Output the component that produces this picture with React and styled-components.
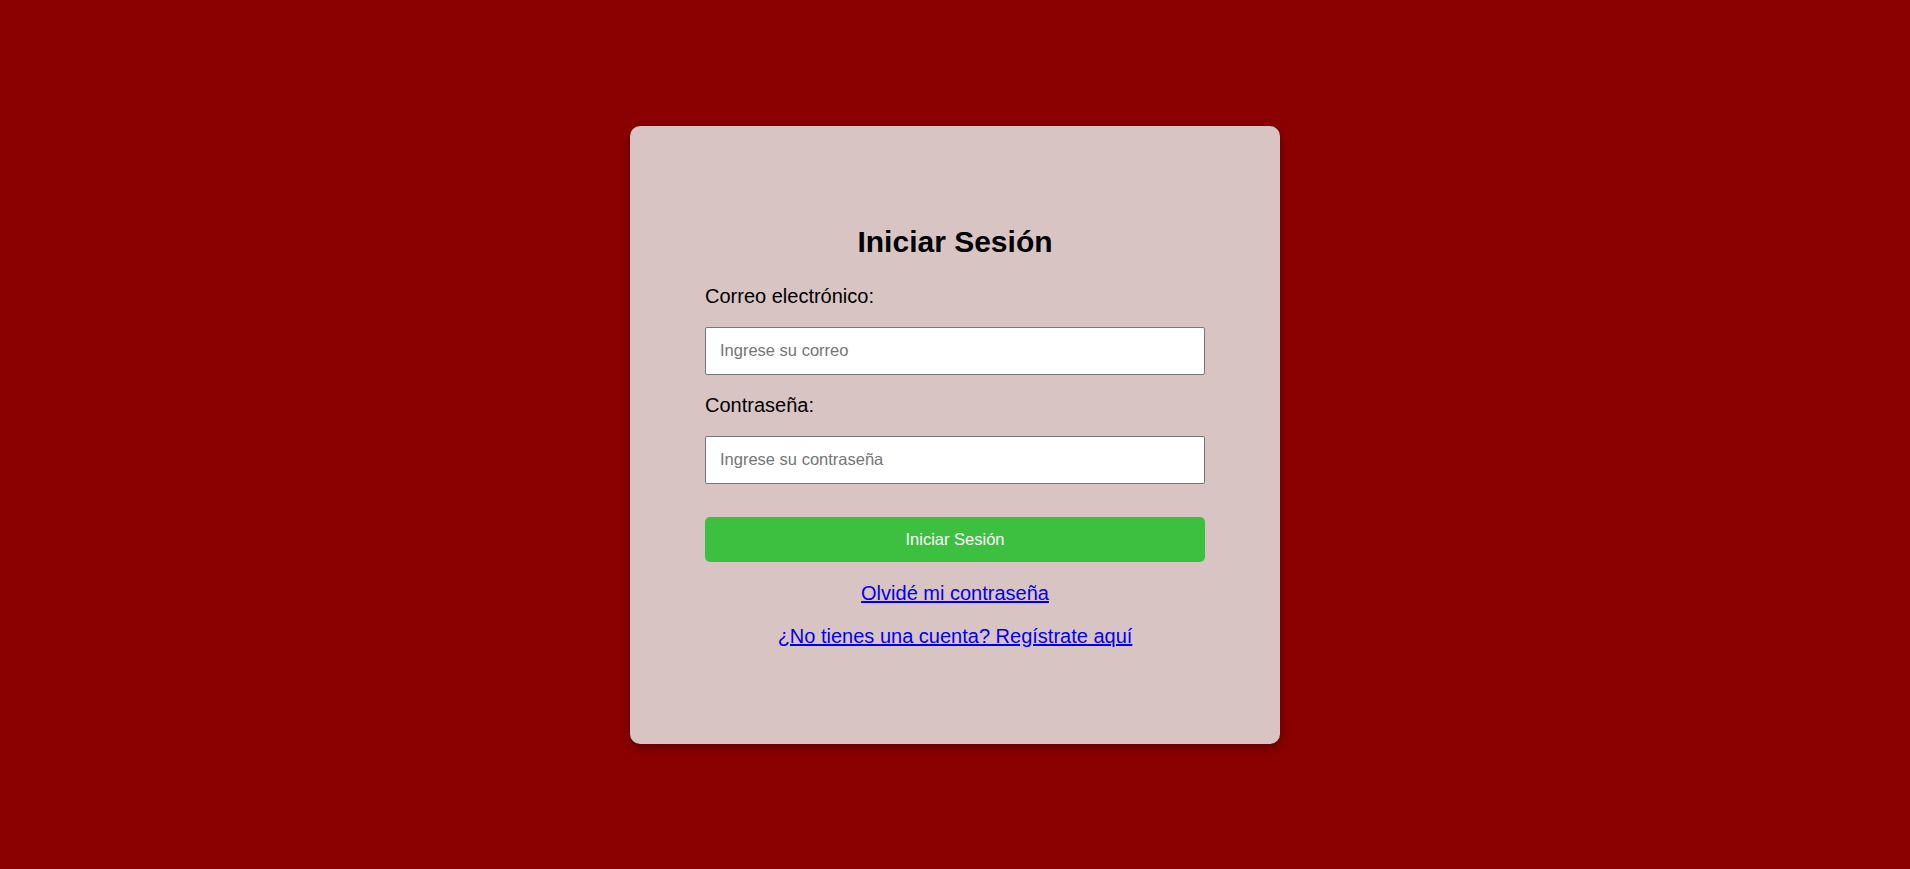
import React, { useState } from "react";
import styled, { createGlobalStyle } from "styled-components";

const GlobalStyle = createGlobalStyle`
  html, body {
    margin: 0;
    padding: 0;
  }

  body {
    background-color: #8b0000;
    font-family: "Liberation Sans", Arial, sans-serif;
  }
`;

const Page = styled.div`
  min-height: 100vh;
  display: flex;
  align-items: center;
  justify-content: center;
`;

const Card = styled.div`
  width: 650px;
  box-sizing: border-box;
  padding: 99px 75px 96px;
  background-color: #d9c4c4;
  border-radius: 10px;
  box-shadow: 0 4px 10px rgba(0, 0, 0, 0.35);
`;

const Title = styled.h2`
  margin: 0 0 26px;
  font-size: 30px;
  line-height: 34px;
  font-weight: bold;
  text-align: center;
  color: #000;
`;

const Form = styled.form`
  display: flex;
  flex-direction: column;
`;

const Label = styled.label`
  display: block;
  font-size: 20px;
  line-height: 23px;
  color: #000;
  margin-bottom: 19px;
`;

const Input = styled.input`
  box-sizing: border-box;
  width: 100%;
  height: 48px;
  padding: 0 14px;
  margin-bottom: ${({ $last }) => ($last ? "33px" : "19px")};
  border: 1px solid #767676;
  border-radius: 2px;
  background: #fff;
  font-family: inherit;
  font-size: 16.5px;
  color: #000;

  &::placeholder {
    color: #757575;
  }
`;

const SubmitButton = styled.button`
  height: 45px;
  width: 100%;
  border: none;
  border-radius: 5px;
  background-color: #3dbf3f;
  color: #fff;
  font-family: inherit;
  font-size: 16.5px;
  cursor: pointer;
`;

const Links = styled.div`
  display: flex;
  flex-direction: column;
  align-items: center;
  gap: 20px;
  margin-top: 20px;
`;

const TextLink = styled.a`
  font-size: 20px;
  line-height: 23px;
  color: #0000ee;
  text-decoration: underline;
`;

const Login = () => {
  const [email, setEmail] = useState("");
  const [password, setPassword] = useState("");

  const handleSubmit = (e) => {
    e.preventDefault();
  };

  return (
    <Card>
      <Title>Iniciar Sesión</Title>
      <Form onSubmit={handleSubmit}>
        <Label htmlFor="email">Correo electrónico:</Label>
        <Input
          id="email"
          type="email"
          placeholder="Ingrese su correo"
          value={email}
          onChange={(e) => setEmail(e.target.value)}
        />
        <Label htmlFor="password">Contraseña:</Label>
        <Input
          id="password"
          type="password"
          placeholder="Ingrese su contraseña"
          value={password}
          onChange={(e) => setPassword(e.target.value)}
          $last
        />
        <SubmitButton type="submit">Iniciar Sesión</SubmitButton>
      </Form>
      <Links>
        <TextLink href="#">Olvidé mi contraseña</TextLink>
        <TextLink href="#">¿No tienes una cuenta? Regístrate aquí</TextLink>
      </Links>
    </Card>
  );
};

const App = () => (
  <>
    <GlobalStyle />
    <Page>
      <Login />
    </Page>
  </>
);

export default App;
